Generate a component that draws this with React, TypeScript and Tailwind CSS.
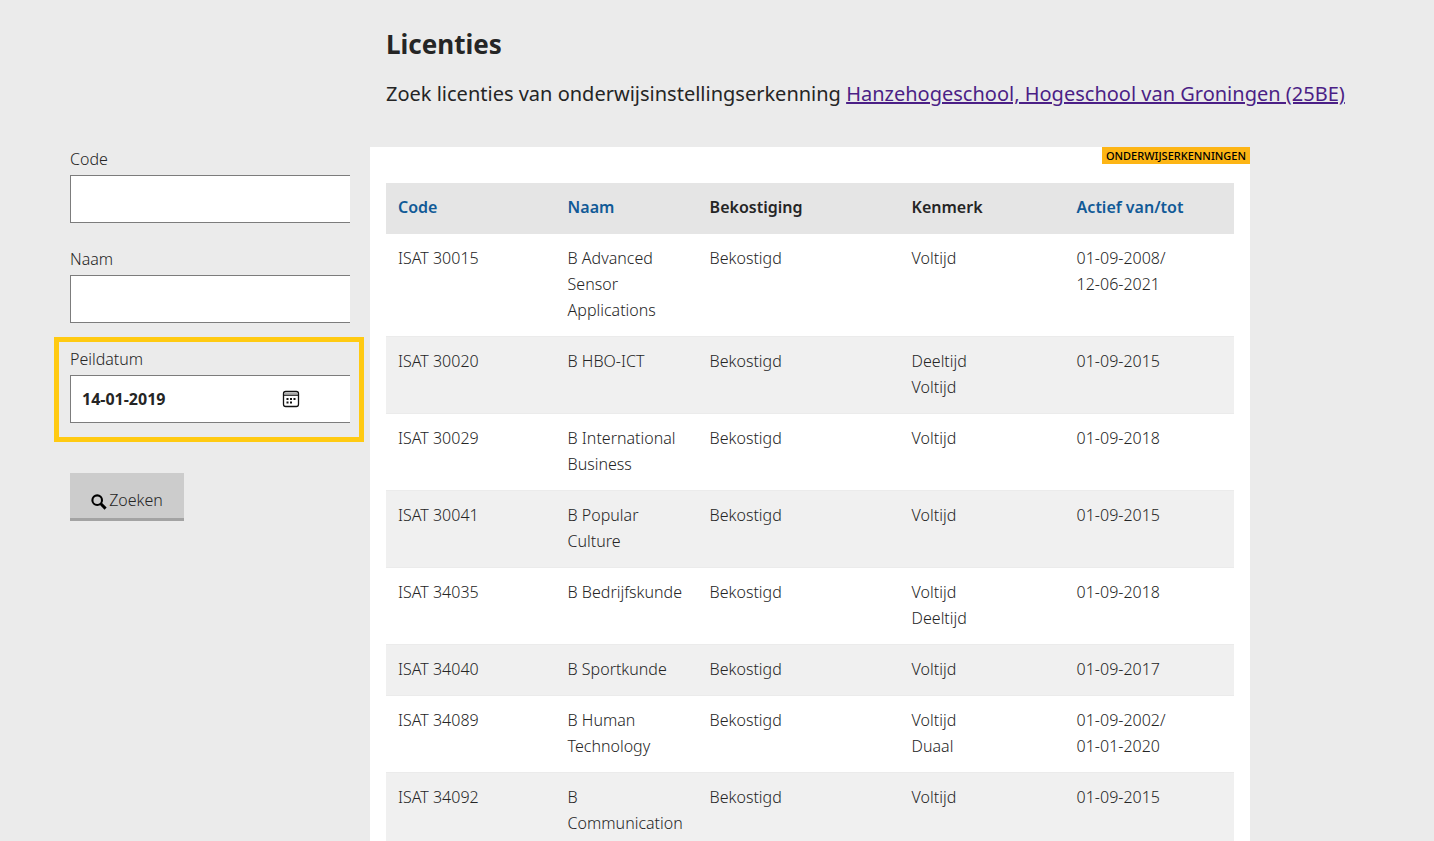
import { ReactNode } from 'react';

type Licentie = {
  code: string;
  naam: string;
  kenmerk: string[];
  actief: string[];
};

const licenties: Licentie[] = [
  { code: 'ISAT 30015', naam: 'B Advanced Sensor Applications', kenmerk: ['Voltijd'], actief: ['01-09-2008/', '12-06-2021'] },
  { code: 'ISAT 30020', naam: 'B HBO-ICT', kenmerk: ['Deeltijd', 'Voltijd'], actief: ['01-09-2015'] },
  { code: 'ISAT 30029', naam: 'B International Business', kenmerk: ['Voltijd'], actief: ['01-09-2018'] },
  { code: 'ISAT 30041', naam: 'B Popular Culture', kenmerk: ['Voltijd'], actief: ['01-09-2015'] },
  { code: 'ISAT 34035', naam: 'B Bedrijfskunde', kenmerk: ['Voltijd', 'Deeltijd'], actief: ['01-09-2018'] },
  { code: 'ISAT 34040', naam: 'B Sportkunde', kenmerk: ['Voltijd'], actief: ['01-09-2017'] },
  { code: 'ISAT 34089', naam: 'B Human Technology', kenmerk: ['Voltijd', 'Duaal'], actief: ['01-09-2002/', '01-01-2020'] },
  { code: 'ISAT 34092', naam: 'B Communication', kenmerk: ['Voltijd'], actief: ['01-09-2015'] },
];

const cell = 'px-3 pt-[11px] pb-[13px]';

function CalendarIcon() {
  return (
    <svg width="18" height="18" viewBox="0 0 18 18" fill="none" aria-hidden="true">
      <rect x="1.5" y="1.5" width="15" height="15" rx="2.2" stroke="#111" strokeWidth="1.3" />
      <path d="M2.2 3.5h13.6" stroke="#aaa" strokeWidth="1.4" />
      <path d="M1.5 5.2h15" stroke="#111" strokeWidth="1.2" />
      <path d="M4.5 8h2v2h-2zM8 8h2v2H8zM11.5 8h2v2h-2zM4.5 11.5h2v2h-2zM8 11.5h2v2H8z" fill="#111" />
    </svg>
  );
}

function SearchIcon() {
  return (
    <svg width="16" height="16" viewBox="0 0 16 16" fill="none" stroke="#000" aria-hidden="true">
      <circle cx="6.2" cy="6.2" r="4.8" strokeWidth="2.1" />
      <path d="M9.8 9.8l4.8 4.8" strokeWidth="3" />
    </svg>
  );
}

function Field({ id, label, value, children }: { id: string; label: string; value?: string; children?: ReactNode }) {
  return (
    <div className="relative">
      <label htmlFor={id} className="block h-7 leading-6">
        {label}
      </label>
      <div className="flex h-12 items-center border border-r-0 border-[#7c7c7c] bg-white">
        <input
          id={id}
          type="text"
          defaultValue={value}
          className="h-full w-full min-w-0 bg-transparent px-[11px] font-bold outline-none"
        />
        {value && (
          <button type="button" aria-label="Kies datum" className="mr-[50px] shrink-0">
            <CalendarIcon />
          </button>
        )}
      </div>
      {children}
    </div>
  );
}

export default function App() {
  return (
    <div className="h-screen overflow-hidden bg-[#ebebeb] font-['Noto_Sans','Open_Sans',sans-serif] text-base font-light text-[#252525]">
      <header className="pt-6 pl-[386px]">
        <h1 className="text-[26px] leading-10 font-bold">Licenties</h1>
        <p className="mt-3 text-xl leading-9 font-normal">
          Zoek licenties van onderwijsinstellingserkenning{' '}
          <a href="#instelling" className="text-[#4b1f86] underline">
            Hanzehogeschool, Hogeschool van Groningen (25BE)
          </a>
        </p>
      </header>

      <div className="mt-[35px] flex items-start gap-5 pr-[184px] pl-[70px]">
        {/* Zoekformulier */}
        <form className="flex w-[280px] shrink-0 flex-col gap-6">
          <Field id="code" label="Code" />
          <Field id="naam" label="Naam" />
          <Field id="peildatum" label="Peildatum" value="14-01-2019">
            <div className="pointer-events-none absolute -top-[10px] -right-[14px] -bottom-[19px] -left-4 border-[5px] border-[#ffca12]" />
          </Field>
          <button
            type="button"
            className="mt-[26px] flex h-12 w-[114px] items-end justify-center gap-[2px] border-b-[3px] border-[#a3a3a3] bg-[#ccc] pb-2"
          >
            <SearchIcon />
            <span className="leading-5">Zoeken</span>
          </button>
        </form>

        {/* Resultaten */}
        <main className="flex min-w-0 grow flex-col bg-white pb-4">
          <span className="self-end bg-[#fdb515] px-1 text-[11px] leading-[17px] font-medium text-black">
            ONDERWIJSERKENNINGEN
          </span>
          <div className="px-4 pt-[19px]">
            <table className="w-full table-fixed text-left leading-[26px]">
              <colgroup>
                <col className="w-[20%]" />
                <col className="w-[142px]" />
                <col className="w-[202px]" />
                <col className="w-[165px]" />
                <col />
              </colgroup>
              <thead>
                <tr className="border-b border-[#e5e5e5] bg-[#e5e5e5] [&>th]:font-semibold">
                  <th className={cell}>
                    <a href="#code" className="text-[#115a97]">Code</a>
                  </th>
                  <th className={cell}>
                    <a href="#naam" className="text-[#115a97]">Naam</a>
                  </th>
                  <th className={cell}>Bekostiging</th>
                  <th className={cell}>Kenmerk</th>
                  <th className={cell}>
                    <a href="#actief" className="text-[#115a97]">Actief van/tot</a>
                  </th>
                </tr>
              </thead>
              <tbody>
                {licenties.map((l) => (
                  <tr key={l.code} className="border-b border-[#ebebeb] align-top even:bg-[#f0f0f0]">
                    <td className={cell}>{l.code}</td>
                    <td className={cell}>{l.naam}</td>
                    <td className={cell}>Bekostigd</td>
                    <td className={cell}>
                      {l.kenmerk.map((k) => (
                        <div key={k}>{k}</div>
                      ))}
                    </td>
                    <td className={cell}>
                      {l.actief.map((a) => (
                        <div key={a}>{a}</div>
                      ))}
                    </td>
                  </tr>
                ))}
              </tbody>
            </table>
          </div>
        </main>
      </div>
    </div>
  );
}
